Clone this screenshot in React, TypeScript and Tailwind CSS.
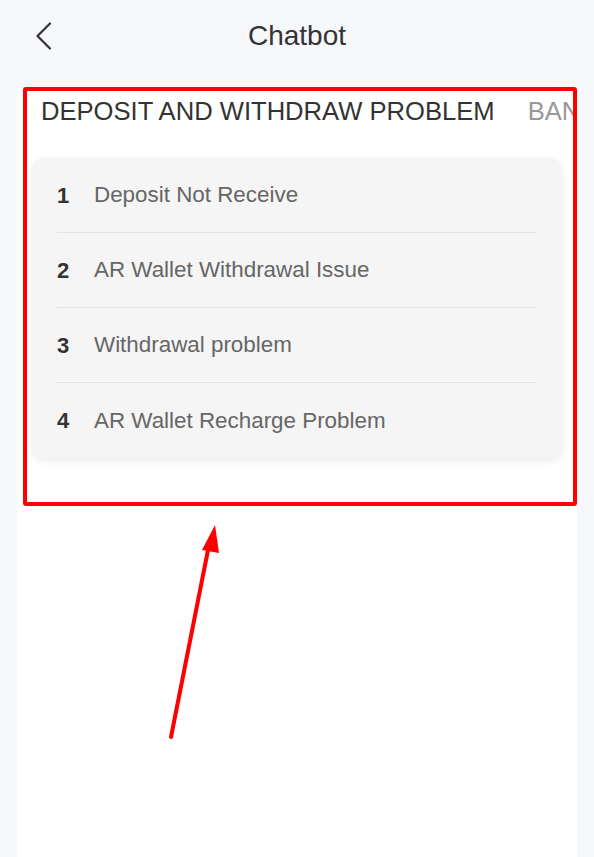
const problems = [
  "Deposit Not Receive",
  "AR Wallet Withdrawal Issue",
  "Withdrawal problem",
  "AR Wallet Recharge Problem",
];

const App = () => {
  return (
    <div className="relative min-h-screen w-[594px] bg-[#f7f8fc] flex flex-col font-['Liberation_Sans',Arial,sans-serif]">
      {/* Header */}
      <div className="relative h-[88px] flex justify-center pt-[14px] shrink-0">
        <button className="absolute left-[33px] top-[21px] w-[20px] h-[30px] flex items-center justify-center">
          <svg width="17" height="28" viewBox="0 0 17 28" fill="none">
            <path d="M15 1.5 L2.5 14 L15 26.5" stroke="#333" strokeWidth="2.2" strokeLinecap="round" strokeLinejoin="round" />
          </svg>
        </button>
        <h1 className="text-[28px] leading-[44px] text-[#333] font-normal">Chatbot</h1>
      </div>

      {/* Panel */}
      <div className="mx-[17px] flex-1 bg-white">
        {/* Tabs */}
        <div className="flex gap-[33px] pl-[24px] pr-[4px] pt-[8px] overflow-hidden whitespace-nowrap">
          <span className="text-[25.6px] leading-[30px] text-[#333]">DEPOSIT AND WITHDRAW PROBLEM</span>
          <span className="text-[25.6px] leading-[30px] text-[#999]">BANK CARD PROBLEM</span>
        </div>

        {/* Question list */}
        <div className="mx-[15px] mt-[32px] rounded-xl bg-[#f5f5f5] px-[25px] shadow-[0_3px_8px_rgba(0,0,0,0.08)]">
          {problems.map((p, i) => (
            <div
              key={p}
              className={`flex items-center h-[75px] ${i < problems.length - 1 ? "border-b border-[#e3e3e3]" : ""}`}
            >
              <span className="w-[37px] text-[22px] font-bold text-[#333]">{i + 1}</span>
              <span className="text-[22.4px] text-[#666]">{p}</span>
            </div>
          ))}
        </div>
      </div>

      {/* Annotation overlay */}
      <div className="absolute left-[23px] top-[87px] w-[554px] h-[419px] border-4 border-[#ff0000] rounded-[3px] pointer-events-none" />
      <svg className="absolute left-0 top-0 pointer-events-none" width="594" height="857">
        <line x1="171" y1="737" x2="209" y2="545" stroke="#ff0000" strokeWidth="4" strokeLinecap="round" />
        <polygon points="215,525 202,550 219,553" fill="#ff0000" />
      </svg>
    </div>
  );
};

export default App;
